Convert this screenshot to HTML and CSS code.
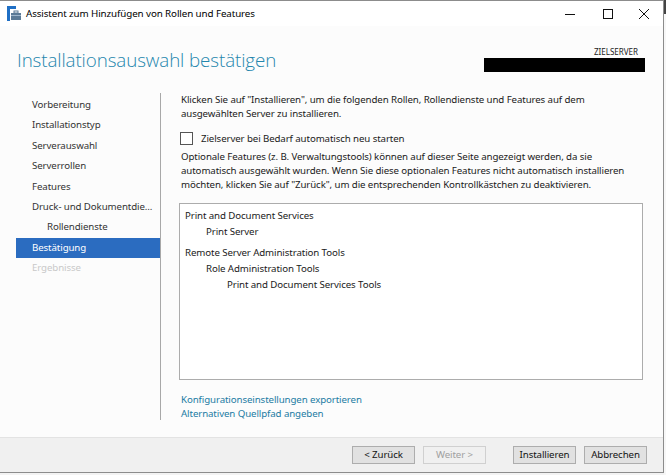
FILE: index.html
```html
<!DOCTYPE html>
<html lang="de">
<head>
<meta charset="utf-8">
<title>Assistent zum Hinzufügen von Rollen und Features</title>
<link rel="stylesheet" href="styles.css">
</head>
<body>
<div class="desk">
  <div class="window">
    <div class="titlebar">
      <svg class="appicon" width="14" height="15" viewBox="0 0 14 15">
        <rect x="0" y="0" width="3" height="15" fill="#1f6fc5"/>
        <rect x="0" y="0" width="9" height="3" fill="#1f6fc5"/>
        <rect x="4" y="7" width="10" height="7" fill="#5b7a96"/>
        <rect x="7" y="5" width="4" height="2" fill="none" stroke="#5b7a96" stroke-width="1"/>
        <rect x="4" y="9" width="10" height="1" fill="#9fb6cc"/>
      </svg>
      <span class="wtitle">Assistent zum Hinzufügen von Rollen und Features</span>
      <div class="controls">
        <svg width="12" height="12" viewBox="0 0 12 12"><line x1="1" y1="6.5" x2="11" y2="6.5" stroke="#111" stroke-width="1"/></svg>
        <svg width="12" height="12" viewBox="0 0 12 12"><rect x="1.5" y="1.5" width="9" height="9" fill="none" stroke="#111" stroke-width="1"/></svg>
        <svg width="12" height="12" viewBox="0 0 12 12"><path d="M1 1 L11 11 M11 1 L1 11" stroke="#111" stroke-width="1"/></svg>
      </div>
    </div>
    <div class="header">
      <h1>Installationsauswahl bestätigen</h1>
      <div class="target">
        <span class="tlabel">ZIELSERVER</span>
        <span class="redact"></span>
      </div>
    </div>
    <div class="main">
      <nav class="nav">
        <div class="item">Vorbereitung</div>
        <div class="item">Installationstyp</div>
        <div class="item">Serverauswahl</div>
        <div class="item">Serverrollen</div>
        <div class="item">Features</div>
        <div class="item">Druck- und Dokumentdie...</div>
        <div class="item sub">Rollendienste</div>
        <div class="item active">Bestätigung</div>
        <div class="item disabled">Ergebnisse</div>
      </nav>
      <section class="content">
        <p class="intro">Klicken Sie auf "Installieren", um die folgenden Rollen, Rollendienste und Features auf dem ausgewählten Server zu installieren.</p>
        <label class="check"><span class="box"></span>Zielserver bei Bedarf automatisch neu starten</label>
        <p class="note">Optionale Features (z. B. Verwaltungstools) können auf dieser Seite angezeigt werden, da sie automatisch ausgewählt wurden. Wenn Sie diese optionalen Features nicht automatisch installieren möchten, klicken Sie auf "Zurück", um die entsprechenden Kontrollkästchen zu deaktivieren.</p>
        <div class="list">
          <div class="group">
            <div class="l0">Print and Document Services</div>
            <div class="l1">Print Server</div>
          </div>
          <div class="group">
            <div class="l0">Remote Server Administration Tools</div>
            <div class="l1">Role Administration Tools</div>
            <div class="l2">Print and Document Services Tools</div>
          </div>
        </div>
        <div class="links">
          <a href="#">Konfigurationseinstellungen exportieren</a>
          <a href="#">Alternativen Quellpfad angeben</a>
        </div>
      </section>
    </div>
    <div class="footer">
      <button class="btn">&lt; Zurück</button>
      <button class="btn" disabled>Weiter &gt;</button>
      <button class="btn wide">Installieren</button>
      <button class="btn">Abbrechen</button>
    </div>
  </div>
  <div class="edge"></div>
</div>
</body>
</html>
```

FILE: styles.css
```css
* { box-sizing: border-box; }
html, body { margin: 0; padding: 0; }
body {
  width: 666px; height: 475px; overflow: hidden;
  background: #f3f3f3;
  font-family: "Noto Sans", "Open Sans", sans-serif;
  font-size: 9.7px;
  letter-spacing: -0.1px;
  color: #1a1a1a;
}
.desk { display: flex; height: 475px; }
.window {
  width: 664px; height: 473px;
  border: 1px solid #8c8c8c;
  border-left: none;
  display: flex; flex-direction: column;
  background: #fcfcfc;
}
.edge { flex: 1; background: linear-gradient(#444 0 14px, #f7f7f7 14px); }
.titlebar {
  height: 25px; background: #fff;
  display: flex; align-items: center;
  padding-left: 7px;
}
.appicon { margin-right: 5px; margin-top: -1px; }
.wtitle { font-size: 9.8px; color: #000; }
.controls { margin-left: auto; display: flex; gap: 24px; padding-right: 13px; }
.controls svg:first-child { margin-right: 2px; }
.header {
  height: 67px;
  display: flex; justify-content: space-between;
  padding: 0 18px 0 17px;
}
h1 {
  margin: 21px 0 0; font-weight: 300; font-size: 18.8px;
  color: #2486ad; font-family: "Open Sans", "Noto Sans", sans-serif;
  letter-spacing: -0.1px;
}
.target { display: flex; flex-direction: column; align-items: flex-end; padding-top: 20px; }
.tlabel { font-size: 8px; color: #222; margin-right: 7px; line-height: 11px; letter-spacing: 0; }
.redact { width: 161px; height: 14px; background: #000; margin-top: 1px; }
.main { flex: 1; display: flex; }
.nav {
  width: 163px; height: 327px;
  padding: 2px 0 0 16px;
  border-right: 1px solid #a8a8a8;
}
.item {
  height: 20.4px; line-height: 20px;
  padding-left: 16px; color: #333;
  white-space: nowrap;
}
.item.sub { padding-left: 31px; }
.item.active { background: #2b6cc0; color: #fff; }
.item.disabled { color: #c9c9c9; }
.content { flex: 1; padding: 0 20px 0 20px; }
.intro, .note { margin: 0; line-height: 14px; }
.check { display: flex; align-items: center; margin: 10px 0 5px -1px; height: 14px; }
.box { width: 13px; height: 13px; border: 1px solid #555; background: #fff; margin-right: 8px; }
.list {
  margin: 11px 0 0 -2px; width: 464px; height: 177px;
  border: 1px solid #acacac; background: #fff;
  padding: 4px 0 0 5px;
}
.group { margin-bottom: 5px; }
.l0, .l1, .l2 { height: 16px; line-height: 16px; }
.l1 { padding-left: 21px; }
.l2 { padding-left: 42px; }
.links { display: flex; flex-direction: column; margin-top: 13px; }
.links a { color: #1b7ba3; text-decoration: none; line-height: 14px; }
.footer {
  height: 35px; background: #f0f0f0;
  border-top: 1px solid #e3e3e3;
  display: flex; align-items: center; justify-content: flex-end;
  padding: 0 16px 1px 0;
}
.btn {
  width: 63px; height: 18px; margin-left: 8px;
  background: #e1e1e1; border: 1px solid #adadad;
  font-family: inherit; font-size: 9.7px; letter-spacing: -0.1px; color: #111;
  padding: 0; line-height: 15px;
}
.btn[disabled] { color: #a0a0a0; background: #f0f0f0; border-color: #d0d0d0; }
.btn.wide { margin-left: 27px; }
```
